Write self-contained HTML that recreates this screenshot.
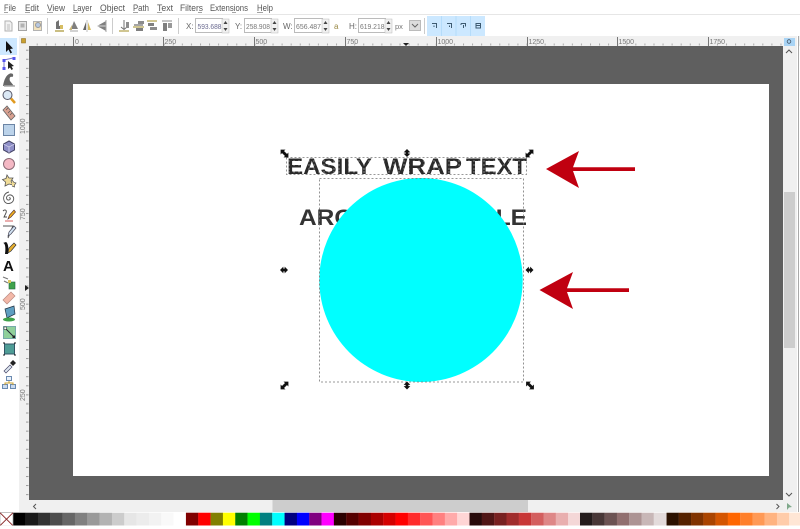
<!DOCTYPE html>
<html><head><meta charset="utf-8"><title>Inkscape</title>
<style>
html,body{margin:0;padding:0;background:#fff;width:800px;height:529px;overflow:hidden}
svg{display:block;filter:blur(.3px)}
text{font-family:"Liberation Sans",sans-serif}
.m{font-size:9.5px;fill:#555}
.l{font-size:8px;fill:#666}
.i{font-size:7.5px;fill:#777}
.r{font-size:7px;fill:#777}
.u{fill:#666}
.b{font-size:22px;font-weight:bold;fill:#2a2a2a}
</style></head><body>
<svg xmlns="http://www.w3.org/2000/svg" width="800" height="529" viewBox="0 0 800 529">
<defs>
<pattern id="ht" x="73" y="36" width="9.07" height="10" patternUnits="userSpaceOnUse"><rect x="0" y="7.500" width="1" height="2" fill="#aaa"/></pattern>
<pattern id="vt" x="19" y="22.5" width="10" height="9.07" patternUnits="userSpaceOnUse"><rect x="7" y="0" width="2.5" height="1" fill="#999"/></pattern>
<g id="h"><path d="M-3.500 0L-1 -2.500V-1H1V-2.500L3.500 0L1 2.500V1H-1V2.500Z" fill="#111" stroke="#111" stroke-width=".7"/></g>
<g id="v"><path d="M0 -3.500L2.500 -1H1V1H2.500L0 3.500L-2.500 1H-1V-1H-2.500Z" fill="#111" stroke="#111" stroke-width=".7"/></g>
<g id="d"><path d="M-3.500 -3.500H0L-1 -2.500L2.500 1L3.500 0V3.500H0L1 2.500L-2.500 -1L-3.500 0Z" fill="#111" stroke="#111" stroke-width=".8"/></g>
<g id="e"><path d="M3.500 -3.500H0L1 -2.500L-2.500 1L-3.500 0V3.500H0L-1 2.500L2.500 -1L3.500 0Z" fill="#111" stroke="#111" stroke-width=".8"/></g>
<g id="sp"><rect x="0" y="0" width="7" height="14" fill="#f0f0f0" stroke="#bbb" stroke-width=".5"/><path d="M1.5 5L3.5 2L5.5 5ZM1.5 9L3.5 12L5.5 9Z" fill="#444"/></g>
</defs>

<rect width="800" height="529" fill="#fff"/>
<!-- menu -->
<rect x="0" y="14" width="800" height="1" fill="#e6e6e6"/>
<text class="m" x="4" y="11" textLength="12" lengthAdjust="spacingAndGlyphs">File</text><rect class="u" x="4" y="12" width="4" height=".6"/>
<text class="m" x="25" y="11" textLength="14" lengthAdjust="spacingAndGlyphs">Edit</text><rect class="u" x="25" y="12" width="5" height=".6"/>
<text class="m" x="47" y="11" textLength="18" lengthAdjust="spacingAndGlyphs">View</text><rect class="u" x="47" y="12" width="6" height=".6"/>
<text class="m" x="73" y="11" textLength="19" lengthAdjust="spacingAndGlyphs">Layer</text><rect class="u" x="73" y="12" width="5" height=".6"/>
<text class="m" x="100" y="11" textLength="25" lengthAdjust="spacingAndGlyphs">Object</text><rect class="u" x="100" y="12" width="6" height=".6"/>
<text class="m" x="133" y="11" textLength="16" lengthAdjust="spacingAndGlyphs">Path</text><rect class="u" x="133" y="12" width="5" height=".6"/>
<text class="m" x="157" y="11" textLength="16" lengthAdjust="spacingAndGlyphs">Text</text><rect class="u" x="157" y="12" width="5" height=".6"/>
<text class="m" x="180" y="11" textLength="23" lengthAdjust="spacingAndGlyphs">Filters</text><rect class="u" x="198" y="12" width="4" height=".6"/>
<text class="m" x="210" y="11" textLength="38" lengthAdjust="spacingAndGlyphs">Extensions</text><rect class="u" x="232" y="12" width="4" height=".6"/>
<text class="m" x="257" y="11" textLength="16" lengthAdjust="spacingAndGlyphs">Help</text><rect class="u" x="257" y="12" width="6" height=".6"/>

<!-- toolbar left icons -->
<g opacity=".75">
<g fill="none" stroke-width="1">
<path d="M5 21H10L12 23V31H5Z" fill="#eee" stroke="#999"/><path d="M7 25H10M7 27H10M7 29H10" stroke="#aaa"/>
<rect x="18.500" y="21.500" width="8" height="9" fill="#ddd" stroke="#888"/><rect x="20.500" y="23.500" width="4" height="4" fill="#999"/>
<rect x="33.500" y="21.500" width="8" height="9" fill="#eed9a8" stroke="#999"/><circle cx="38" cy="25" r="2.500" fill="#9fb6d8" stroke="#777"/>
</g>
<path d="M55 31H64" stroke="#a08a20" stroke-width="1.500"/><path d="M56 22L59 20V26L63 25V29H56Z" fill="#444"/><rect x="60" y="25" width="3" height="4" fill="#c9a830"/>
<path d="M70 31H78" stroke="#888" stroke-width="1"/><path d="M71 29L74 21L76 25L78 29Z" fill="#555"/><path d="M69 30L72 25V30Z" fill="#b8a050"/>
<path d="M87 20V32" stroke="#aaa"/><path d="M86 22V30H83Z" fill="#333"/><path d="M88 22V30H91Z" fill="#c9a830"/>
<path d="M97 26L106 21V31Z" fill="#555"/><path d="M97 26H106" stroke="#ccc"/><path d="M106 20V32" stroke="#888"/>
<path d="M119 31H129" stroke="#a08a20" stroke-width="1.300"/><path d="M124 20V29M121 27L124 29.500L127 27" stroke="#444" fill="none"/><rect x="126" y="22" width="3" height="6" fill="#666"/>
<path d="M133 27H144" stroke="#a08a20" stroke-width="1.300"/><rect x="138" y="21" width="6" height="3" fill="#666"/><rect x="134" y="24" width="9" height="2" fill="#888"/><rect x="136" y="28" width="7" height="3" fill="#555"/>
<path d="M147 21H157" stroke="#a08a20" stroke-width="1.300"/><rect x="148" y="23" width="6" height="3" fill="#555"/><rect x="150" y="27" width="7" height="3" fill="#666"/>
<path d="M162 21H172" stroke="#888" stroke-width="1.300"/><rect x="163" y="23" width="4" height="8" fill="#555"/><rect x="168" y="23" width="4" height="5" fill="#777"/>
</g>
<rect x="47" y="18" width="1" height="16" fill="#ccc"/>
<rect x="112" y="18" width="1" height="16" fill="#ccc"/>
<rect x="178" y="18" width="1" height="16" fill="#ccc"/>

<!-- fields -->
<text class="l" x="186" y="29">X:</text>
<rect x="195.500" y="18.500" width="27" height="14" fill="#fff" stroke="#bbb"/><text class="i" x="197.500" y="29" textLength="24" lengthAdjust="spacingAndGlyphs" style="fill:#6a6a90">593.688</text><use href="#sp" x="222" y="19"/>
<text class="l" x="235" y="29">Y:</text>
<rect x="244.500" y="18.500" width="27" height="14" fill="#fff" stroke="#bbb"/><text class="i" x="246" y="29" textLength="24" lengthAdjust="spacingAndGlyphs">258.908</text><use href="#sp" x="271" y="19"/>
<text class="l" x="283" y="29">W:</text>
<rect x="294.500" y="18.500" width="28" height="14" fill="#fff" stroke="#bbb"/><text class="i" x="296" y="29" textLength="25" lengthAdjust="spacingAndGlyphs">656.487</text><use href="#sp" x="322" y="19"/>
<text x="334" y="29" style="font-size:8px;fill:#998844">a</text>
<text class="l" x="349" y="29">H:</text>
<rect x="358.500" y="18.500" width="27" height="14" fill="#fff" stroke="#bbb"/><text class="i" x="360" y="29" textLength="24.500" lengthAdjust="spacingAndGlyphs">619.218</text><use href="#sp" x="385" y="19"/>
<text class="i" x="395" y="29">px</text>
<rect x="409.500" y="20.500" width="11" height="10" fill="#ddd" stroke="#bbb"/><path d="M412 24L415 27L418 24" fill="none" stroke="#666"/>
<rect x="424" y="18" width="1" height="16" fill="#ccc"/>

<!-- blue toggle buttons -->
<rect x="427" y="16" width="58" height="20" fill="#cce8ff"/>
<path d="M441.500 16V36M456 16V36M470.500 16V36" stroke="#b5dcfa"/>
<g fill="none" stroke="#3d5a70" stroke-width="1">
<path d="M432 23.500H436.500V28M434 25.500V27"/><path d="M447 23.500H451.500V28M449.500 25.500V27"/><path d="M461 23.500H465.500V26.500M461 23.500V25M463.500 25V28"/><path d="M476 23.500H480.500V28H476ZM476 25.500H480.500"/>
</g>

<!-- rulers -->
<rect x="19" y="36" width="781" height="10" fill="#f0f0f0"/>
<rect x="19" y="36" width="10" height="466" fill="#f0f0f0"/>
<rect x="29" y="36" width="754" height="10" fill="url(#ht)"/>
<rect x="19" y="46" width="10" height="454" fill="url(#vt)"/>
<path d="M21.500 38.500H25.500V43H21.500Z" fill="#c9a030" stroke="#8a6a20" stroke-width=".6"/>
<g fill="#777">
<rect x="73" y="37" width="1" height="9"/><rect x="163" y="37" width="1" height="9"/><rect x="254" y="37" width="1" height="9"/><rect x="345" y="37" width="1" height="9"/><rect x="436" y="37" width="1" height="9"/><rect x="527" y="37" width="1" height="9"/><rect x="617" y="37" width="1" height="9"/><rect x="708" y="37" width="1" height="9"/>
</g>
<text class="r" x="75" y="44">0</text><text class="r" x="164.500" y="44">250</text><text class="r" x="255.500" y="44">500</text><text class="r" x="346.500" y="44">750</text><text class="r" x="437.500" y="44">1000</text><text class="r" x="528.500" y="44">1250</text><text class="r" x="618.500" y="44">1500</text><text class="r" x="709.500" y="44">1750</text>
<path d="M403 43H409L406 46Z" fill="#222"/>
<path d="M25 285V291L29 288Z" fill="#222"/>
<g>
<text class="r" transform="translate(25,134) rotate(-90)">1000</text>
<text class="r" transform="translate(25,220) rotate(-90)">750</text>
<text class="r" transform="translate(25,310) rotate(-90)">500</text>
<text class="r" transform="translate(25,401) rotate(-90)">250</text>
</g>

<!-- canvas -->
<rect x="29" y="46" width="754" height="454" fill="#5f5f5f"/>
<rect x="73" y="84" width="696" height="392" fill="#fff"/>

<!-- text -->
<text class="b" x="287" y="174" textLength="85" lengthAdjust="spacingAndGlyphs">EASILY</text>
<text class="b" x="383" y="174" textLength="79" lengthAdjust="spacingAndGlyphs">WRAP</text>
<text class="b" x="466" y="174" textLength="61" lengthAdjust="spacingAndGlyphs">TEXT</text>
<text class="b" x="299" y="225" textLength="228" lengthAdjust="spacingAndGlyphs" style="fill:#333">AROUND A CIRCLE</text>
<!-- hatch over first line -->
<path d="M288 161H526M288 165H526M288 169H526M288 172H526" stroke="#fff" stroke-width=".5" stroke-dasharray="2 3" opacity=".8"/>

<!-- circle -->
<ellipse cx="421" cy="280" rx="101.700" ry="102" fill="#00ffff"/>

<!-- dashed -->
<rect x="286.500" y="157.500" width="240" height="17" fill="none" stroke="#777" stroke-width=".8" stroke-dasharray="2 2"/>
<rect x="319.500" y="178.500" width="204" height="203.500" fill="none" stroke="#777" stroke-width=".8" stroke-dasharray="2 2"/>

<!-- handles -->
<use href="#d" x="284.500" y="153.500"/><use href="#e" x="529.500" y="153.500"/>
<use href="#e" x="284.500" y="385.500"/><use href="#d" x="530" y="385.500"/>
<use href="#v" x="407" y="153"/><use href="#v" x="407" y="385.500"/>
<use href="#h" x="284" y="270"/><use href="#h" x="529.500" y="270"/>

<!-- red arrows -->
<path d="M546 169L579 151L573 167.300H635V171H573L579 188Z" fill="#c00010"/>
<path d="M539.500 290L573 272L567 288.300H629V292H567L573 309Z" fill="#c00010"/>

<!-- scrollbars -->
<rect x="783" y="46" width="14" height="454" fill="#f0f0f0"/>
<rect x="784" y="192" width="11" height="156" fill="#cdcdcd"/>
<rect x="784" y="38" width="11" height="8" fill="#a9d4f5"/>
<circle cx="789" cy="41.500" r="1.800" fill="none" stroke="#456" stroke-width=".8"/>
<path d="M786 53L789 50L792 53" fill="none" stroke="#555" stroke-width="1"/>
<path d="M786 493L789 496L792 493" fill="none" stroke="#555" stroke-width="1"/>
<rect x="797" y="36" width="1" height="476" fill="#fff"/>
<rect x="798" y="36" width="1" height="476" fill="#aaa"/>
<rect x="19" y="500" width="778" height="12" fill="#f0f0f0"/>
<rect x="272.500" y="500" width="255.500" height="12" fill="#cdcdcd"/>
<path d="M36 504L33.500 506.500L36 509" fill="none" stroke="#555" stroke-width="1"/>
<path d="M776.500 504L779 506.500L776.500 509" fill="none" stroke="#555" stroke-width="1"/>
<path d="M787 503L792 507L789 507.500L787 510Z" fill="#7fa88a"/>
<rect x="0" y="512" width="800" height="1" fill="#fff"/>

<!-- palette -->
<g transform="translate(0,512.700)">
<rect x="0" y="0" width="13" height="13" fill="#fff" stroke="#999" stroke-width=".6"/>
<path d="M0 0L13 13M13 0L0 13" stroke="#8a2a2a" stroke-width="1"/>
<g transform="translate(13.300,0) scale(1.0049,1) translate(-13.300,0)">
<rect x="13.300" width="12.400" height="13" fill="#000"/><rect x="25.570" width="12.400" height="13" fill="#1a1a1a"/><rect x="37.840" width="12.400" height="13" fill="#333"/><rect x="50.110" width="12.400" height="13" fill="#4d4d4d"/><rect x="62.380" width="12.400" height="13" fill="#666"/><rect x="74.650" width="12.400" height="13" fill="#808080"/><rect x="86.920" width="12.400" height="13" fill="#999"/><rect x="99.190" width="12.400" height="13" fill="#b3b3b3"/><rect x="111.460" width="12.400" height="13" fill="#ccc"/><rect x="123.730" width="12.400" height="13" fill="#e6e6e6"/><rect x="136" width="12.400" height="13" fill="#ececec"/><rect x="148.270" width="12.400" height="13" fill="#f2f2f2"/><rect x="160.540" width="12.400" height="13" fill="#f9f9f9"/><rect x="172.810" width="12.400" height="13" fill="#fff"/>
<rect x="185.080" width="12.400" height="13" fill="#800000"/><rect x="197.350" width="12.400" height="13" fill="#f00"/><rect x="209.620" width="12.400" height="13" fill="#808000"/><rect x="221.890" width="12.400" height="13" fill="#ff0"/><rect x="234.160" width="12.400" height="13" fill="#008000"/><rect x="246.430" width="12.400" height="13" fill="#0f0"/><rect x="258.700" width="12.400" height="13" fill="#008080"/><rect x="270.970" width="12.400" height="13" fill="#0ff"/><rect x="283.240" width="12.400" height="13" fill="#000080"/><rect x="295.510" width="12.400" height="13" fill="#00f"/><rect x="307.780" width="12.400" height="13" fill="#800080"/><rect x="320.050" width="12.400" height="13" fill="#f0f"/>
<rect x="332.320" width="12.400" height="13" fill="#2b0000"/><rect x="344.590" width="12.400" height="13" fill="#500"/><rect x="356.860" width="12.400" height="13" fill="#800000"/><rect x="369.130" width="12.400" height="13" fill="#a00"/><rect x="381.400" width="12.400" height="13" fill="#d40000"/><rect x="393.670" width="12.400" height="13" fill="#f00"/><rect x="405.940" width="12.400" height="13" fill="#ff2a2a"/><rect x="418.210" width="12.400" height="13" fill="#f55"/><rect x="430.480" width="12.400" height="13" fill="#ff8080"/><rect x="442.750" width="12.400" height="13" fill="#faa"/><rect x="455.020" width="12.400" height="13" fill="#ffd5d5"/>
<rect x="467.290" width="12.400" height="13" fill="#280b0b"/><rect x="479.560" width="12.400" height="13" fill="#501616"/><rect x="491.830" width="12.400" height="13" fill="#782121"/><rect x="504.100" width="12.400" height="13" fill="#a02c2c"/><rect x="516.370" width="12.400" height="13" fill="#c83737"/><rect x="528.640" width="12.400" height="13" fill="#d35f5f"/><rect x="540.910" width="12.400" height="13" fill="#de8787"/><rect x="553.180" width="12.400" height="13" fill="#e9afaf"/><rect x="565.450" width="12.400" height="13" fill="#f4d7d7"/>
</g>
<rect x="580" width="12.400" height="13" fill="#241c1c"/><rect x="592.300" width="12.400" height="13" fill="#483737"/><rect x="604.600" width="12.400" height="13" fill="#6c5353"/><rect x="616.900" width="12.400" height="13" fill="#916f6f"/><rect x="629.200" width="12.400" height="13" fill="#ac9393"/><rect x="641.500" width="12.400" height="13" fill="#c8b7b7"/><rect x="653.800" width="12.400" height="13" fill="#e3dbdb"/>
<rect x="666.500" width="12.400" height="13" fill="#2b1100"/><rect x="678.770" width="12.400" height="13" fill="#520"/><rect x="691.040" width="12.400" height="13" fill="#803300"/><rect x="703.310" width="12.400" height="13" fill="#a40"/><rect x="715.580" width="12.400" height="13" fill="#d45500"/><rect x="727.850" width="12.400" height="13" fill="#f60"/><rect x="740.120" width="12.400" height="13" fill="#ff7f2a"/><rect x="752.390" width="12.400" height="13" fill="#f95"/><rect x="764.660" width="12.400" height="13" fill="#ffb380"/><rect x="776.930" width="12.400" height="13" fill="#fca"/><rect x="789.200" width="12.400" height="13" fill="#ffe6d5"/>
</g>

<!-- left toolbox -->
<rect x="0" y="38" width="17" height="17" fill="#cde8ff"/>
<!-- selector -->
<path d="M6 41L6 52L8.500 49.500L10.500 53.500L12 52.500L10 49L13 48.500Z" fill="#111"/>
<!-- node -->
<path d="M4 60L13 58M4 60L4 68" fill="none" stroke="#7777cc"/><rect x="2.500" y="59" width="3" height="3" fill="#5555ee"/><rect x="12.500" y="57" width="3" height="3" fill="#5555ee"/><rect x="2.500" y="67" width="3" height="3" fill="#5555ee"/>
<path d="M8 61L8 69L10 67.500L11.500 70L13 69L11.500 66.500L14 66Z" fill="#222"/>
<!-- tweak -->
<path d="M3 86C4 80 6 75 10 73.500C13 73 14 75 12.500 77C10 76 9 78 10 81L14 86Z" fill="#666"/><path d="M4 86H15" stroke="#aaa" stroke-width="1.500"/>
<!-- zoom -->
<circle cx="7.500" cy="95" r="4.500" fill="#dbe8f5" stroke="#556"/><path d="M11 98.500L15 103" stroke="#e09a20" stroke-width="2.500"/>
<!-- measure -->
<path d="M3 110L7 106L15 116L11 120Z" fill="#d8a090" stroke="#666" stroke-width=".8"/><path d="M6 110L8 108M8 113L10 111M10 115L12 113" stroke="#555" stroke-width=".6"/>
<!-- rect -->
<rect x="3.500" y="124.500" width="11" height="11" fill="#bcd3ea" stroke="#6c85a5"/>
<!-- 3d box -->
<path d="M9 141L14.500 144V150L9 153L3.500 150V144Z" fill="#8f8fc8" stroke="#446"/><path d="M9 147L14.500 144M9 147V153M9 147L3.500 144" stroke="#dde" stroke-width=".7"/>
<!-- circle -->
<circle cx="9" cy="164" r="5.500" fill="#f4b8c4" stroke="#8a6a75"/>
<!-- star -->
<path d="M7 175L9 178L13 178L11 181L13 185L9 184L5 186L5.500 182L2.500 179.500L6 178.500Z" fill="#f0dc98" stroke="#555" stroke-width=".8"/><path d="M12 180L14 182.500L16 183L14.500 185L14.500 187L12 186" fill="#f0dc98" stroke="#555" stroke-width=".7"/>
<!-- spiral -->
<path d="M9 198C10.500 197 11 199.500 9 200C6.500 200.500 5.500 197 8 195.500C11.500 193.500 14.500 197 13.500 200C12.500 203.500 7 205 4.500 201.500C2.500 198 4 193 9 192" fill="none" stroke="#555" stroke-width=".9"/>
<!-- pencil -->
<path d="M3 211C5 209 7 210 6 213L4 217H7" fill="none" stroke="#444" stroke-width=".9"/><path d="M8 219L9.500 215L14 210L15.500 212L11 217Z" fill="#f0b020" stroke="#533" stroke-width=".7"/><path d="M5 221H13" stroke="#c33" stroke-width=".8"/>
<!-- bezier -->
<path d="M3 226H13L8 238" fill="none" stroke="#555"/><path d="M8 236L9 232L14 226L16 228L11 234Z" fill="#cfe0f0" stroke="#445" stroke-width=".7"/>
<!-- calligraphy -->
<path d="M3 243C5 243 6 247 5 254L8 254C9 248 8 243 6 242Z" fill="#111"/><path d="M8 253L9 248L14 243L16 245L11 251Z" fill="#e8b030" stroke="#333" stroke-width=".7"/>
<!-- text -->
<text x="3" y="271" style="font-size:15px;font-weight:bold;fill:#111">A</text>
<!-- spray -->
<rect x="9" y="282" width="6" height="7" fill="#3fa24a" stroke="#264" stroke-width=".6"/><path d="M3 277L8 279M4 281L8 283" stroke="#777" stroke-width="1.100"/><rect x="8" y="280" width="3" height="3" fill="#dcc860"/>
<!-- eraser -->
<path d="M3 300L11 292L15 296L7 304Z" fill="#f3b8a8" stroke="#b98a80" stroke-width=".7"/>
<!-- bucket -->
<path d="M5 309L14 306L15 314L7 318Z" fill="#5f9ec0" stroke="#234" stroke-width=".7"/><ellipse cx="9" cy="319.500" rx="6" ry="2" fill="#3fa24a"/>
<!-- gradient -->
<rect x="3.500" y="326.500" width="12" height="12" fill="#8fd09a" stroke="#7aa"/><path d="M5 328L14 337" stroke="#223"/><rect x="4" y="327" width="2.500" height="2.500" fill="#fff" stroke="#222" stroke-width=".5"/><rect x="12.500" y="335.500" width="2.500" height="2.500" fill="#222"/>
<!-- mesh -->
<rect x="4.500" y="344" width="10" height="10" fill="#4f9d96" stroke="#356"/><path d="M3 343H5M14 343H16M3 355H5M14 355H16" stroke="#222"/>
<!-- dropper -->
<path d="M4 371L10 365L12 367L6 373Z" fill="#dde6f0" stroke="#446" stroke-width=".7"/><path d="M10 363L13 360L16 363L13 366Z" fill="#222"/>
<!-- connector -->
<rect x="6.500" y="376.500" width="5" height="4" fill="#e8f0fa" stroke="#6a8ab0"/><rect x="2.500" y="384.500" width="5" height="4" fill="#c9daf0" stroke="#6a8ab0"/><rect x="10.500" y="384.500" width="5" height="4" fill="#c9daf0" stroke="#6a8ab0"/><path d="M9 381V383H5V385M9 383H13V385" fill="none" stroke="#c9a030"/>
<rect x="0" y="525.500" width="800" height="4" fill="#fff"/>
</svg>
</body></html>
